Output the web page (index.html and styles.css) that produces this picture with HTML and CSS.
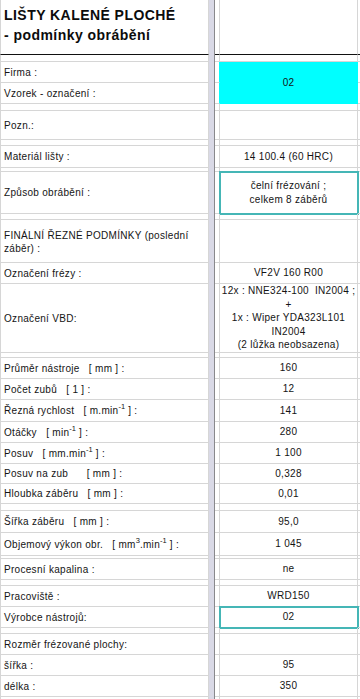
FILE: index.html
```html
<!DOCTYPE html>
<html lang="cs">
<head>
<meta charset="utf-8">
<title>Lišty kalené ploché - podmínky obrábění</title>
<link rel="stylesheet" href="styles.css">
</head>
<body>
<div class="sheet">
  <div class="bar"></div>

  <div class="c l title hd">LIŠTY KALENÉ PLOCHÉ<br>- podmínky obrábění</div><div class="c g hd"></div><div class="c v hd"></div><div class="c t hd"></div>
  <div class="c l"></div><div class="c g"></div><div class="c v"></div><div class="c t"></div>

  <div class="c l">Firma :</div><div class="c g cy"></div><div class="c v cyan">02</div><div class="c t"></div>
  <div class="c l">Vzorek - označení :</div><div class="c g cy"></div><div class="c t"></div>
  <div class="c l"></div><div class="c g"></div><div class="c v"></div><div class="c t"></div>

  <div class="c l">Pozn.:</div><div class="c g"></div><div class="c v"></div><div class="c t"></div>
  <div class="c l"></div><div class="c g"></div><div class="c v"></div><div class="c t"></div>

  <div class="c l">Materiál lišty :</div><div class="c g"></div><div class="c v">14 100.4 (60 HRC)</div><div class="c t"></div>
  <div class="c l"></div><div class="c g"></div><div class="c v"></div><div class="c t"></div>

  <div class="c l">Způsob obrábění :</div><div class="c g"></div><div class="c v box">čelní frézování ;<br>celkem 8 záběrů</div><div class="c t"></div>
  <div class="c l"></div><div class="c g"></div><div class="c v"></div><div class="c t"></div>

  <div class="c l multi">FINÁLNÍ ŘEZNÉ PODMÍNKY (poslední<br>záběr) :</div><div class="c g"></div><div class="c v"></div><div class="c t"></div>
  <div class="c l">Označení frézy :</div><div class="c g"></div><div class="c v">VF2V 160 R00</div><div class="c t"></div>
  <div class="c l">Označení VBD:</div><div class="c g"></div><div class="c v">12x : NNE324-100  IN2004 ;<br>+<br>1x : Wiper YDA323L101<br>IN2004<br>(2 lůžka neobsazena)</div><div class="c t"></div>
  <div class="c l"></div><div class="c g"></div><div class="c v"></div><div class="c t"></div>

  <div class="c l">Průměr nástroje   [ mm ] :</div><div class="c g"></div><div class="c v">160</div><div class="c t"></div>
  <div class="c l">Počet zubů   [ 1 ] :</div><div class="c g"></div><div class="c v">12</div><div class="c t"></div>
  <div class="c l"><span>Řezná rychlost   [ m.min<sup class="sup">-1</sup> ] :</span></div><div class="c g"></div><div class="c v">141</div><div class="c t"></div>
  <div class="c l"><span>Otáčky   [ min<sup class="sup">-1</sup> ] :</span></div><div class="c g"></div><div class="c v">280</div><div class="c t"></div>
  <div class="c l"><span>Posuv   [ mm.min<sup class="sup">-1</sup> ] :</span></div><div class="c g"></div><div class="c v">1 100</div><div class="c t"></div>
  <div class="c l">Posuv na zub      [ mm ] :</div><div class="c g"></div><div class="c v">0,328</div><div class="c t"></div>
  <div class="c l">Hloubka záběru   [ mm ] :</div><div class="c g"></div><div class="c v">0,01</div><div class="c t"></div>
  <div class="c l"></div><div class="c g"></div><div class="c v"></div><div class="c t"></div>

  <div class="c l">Šířka záběru   [ mm ] :</div><div class="c g"></div><div class="c v">95,0</div><div class="c t"></div>
  <div class="c l"><span>Objemový výkon obr.   [ mm<sup class="sup">3</sup>.min<sup class="sup">-1</sup> ] :</span></div><div class="c g"></div><div class="c v">1 045</div><div class="c t"></div>
  <div class="c l"></div><div class="c g"></div><div class="c v"></div><div class="c t"></div>

  <div class="c l">Procesní kapalina :</div><div class="c g"></div><div class="c v">ne</div><div class="c t"></div>
  <div class="c l"></div><div class="c g"></div><div class="c v"></div><div class="c t"></div>

  <div class="c l">Pracoviště :</div><div class="c g"></div><div class="c v">WRD150</div><div class="c t"></div>
  <div class="c l">Výrobce nástrojů:</div><div class="c g"></div><div class="c v box">02</div><div class="c t"></div>
  <div class="c l"></div><div class="c g"></div><div class="c v"></div><div class="c t"></div>

  <div class="c l">Rozměr frézované plochy:</div><div class="c g"></div><div class="c v"></div><div class="c t"></div>
  <div class="c l">šířka :</div><div class="c g"></div><div class="c v">95</div><div class="c t"></div>
  <div class="c l">délka :</div><div class="c g"></div><div class="c v">350</div><div class="c t"></div>
  <div class="c l"></div><div class="c g"></div><div class="c v"></div><div class="c t"></div>
</div>
</body>
</html>
```
FILE: styles.css
```css
html, body {
  margin: 0;
  padding: 0;
  background: #ffffff;
}

body {
  width: 360px;
  height: 699px;
  overflow: hidden;
  font-family: "Liberation Sans", Arial, sans-serif;
  font-size: 10px;
  letter-spacing: 0.3px;
  color: #141414;
}

.sheet {
  display: grid;
  grid-template-columns: 209px 6px 5px 138px 2px;
  grid-template-rows:
    55px 7px 21px 21px 7px 29px 6px 22px 4px 42px 6px
    43px 21px 69px 5px
    21px 21px 22px 21px 21px 20px 20px 7px
    22px 23px 3px 21px 6px 21px 21px 6px 21px 21px 21px 4px;
}

.bar {
  grid-column: 2;
  grid-row: 1 / -1;
  background: #d9d9e6;
  border-right: 1px solid #88888c;
}

.c {
  box-sizing: border-box;
  border-bottom: 1px solid #d6d6d6;
  border-right: 1px solid #d6d6d6;
  min-width: 0;
}

.l {
  grid-column: 1;
  border-left: 1px solid #d6d6d6;
  padding-left: 3px;
  display: flex;
  align-items: center;
  white-space: pre;
  line-height: 13px;
}

.g {
  grid-column: 3;
}

.v {
  grid-column: 4;
  display: flex;
  align-items: center;
  justify-content: center;
  text-align: center;
  white-space: pre;
  line-height: 13.4px;
}

.t {
  grid-column: 5;
  border-right: none;
}

.hd {
  border-bottom-color: #111111;
}

.title {
  align-items: flex-start;
  padding-top: 5px;
  font-size: 14px;
  font-weight: bold;
  letter-spacing: 0.45px;
  line-height: 20px;
  color: #0c0c0c;
}

.multi {
  padding-top: 2px;
}

.cy {
  border-right-color: #00ffff;
}

.cyan {
  grid-row: span 2;
  background: #00ffff;
  border-right-color: #00ffff;
  border-bottom-color: #00ffff;
}

.box {
  outline: 2px solid #45b6b6;
  outline-offset: -1px;
}

.sup {
  display: inline-block;
  font-size: 7.5px;
  line-height: 7px;
  vertical-align: top;
  margin-top: -1px;
  letter-spacing: 0;
}
```
